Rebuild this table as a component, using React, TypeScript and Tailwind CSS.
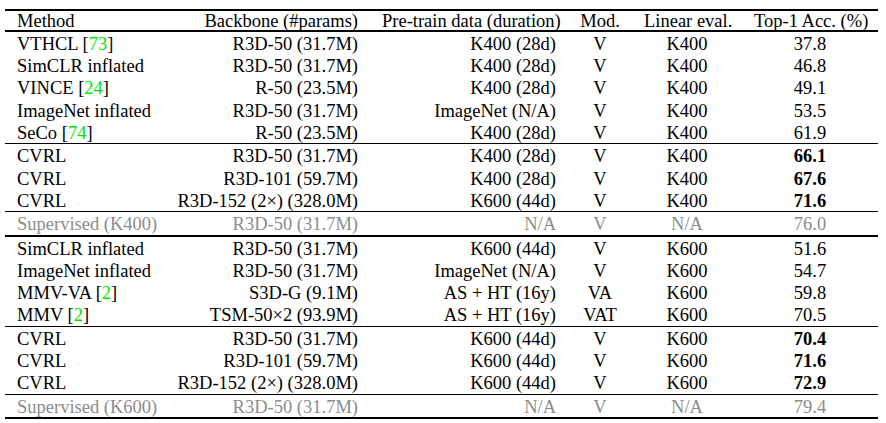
import React from "react";

type Row = {
  m: React.ReactNode;
  b: string;
  p: string;
  mod: string;
  l: string;
  t: string;
  bold?: boolean;
  gray?: boolean;
};

const G = ({ n }: { n: string }) => (
  <>
    [<span className="text-[#00e600]">{n}</span>]
  </>
);

const groups: { rows: Row[]; after: "thin" | "thick" | "bottom" }[] = [
  {
    rows: [
      { m: <>VTHCL <G n="73" /></>, b: "R3D-50 (31.7M)", p: "K400 (28d)", mod: "V", l: "K400", t: "37.8" },
      { m: "SimCLR inflated", b: "R3D-50 (31.7M)", p: "K400 (28d)", mod: "V", l: "K400", t: "46.8" },
      { m: <>VINCE <G n="24" /></>, b: "R-50 (23.5M)", p: "K400 (28d)", mod: "V", l: "K400", t: "49.1" },
      { m: "ImageNet inflated", b: "R3D-50 (31.7M)", p: "ImageNet (N/A)", mod: "V", l: "K400", t: "53.5" },
      { m: <>SeCo <G n="74" /></>, b: "R-50 (23.5M)", p: "K400 (28d)", mod: "V", l: "K400", t: "61.9" },
    ],
    after: "thin",
  },
  {
    rows: [
      { m: "CVRL", b: "R3D-50 (31.7M)", p: "K400 (28d)", mod: "V", l: "K400", t: "66.1", bold: true },
      { m: "CVRL", b: "R3D-101 (59.7M)", p: "K400 (28d)", mod: "V", l: "K400", t: "67.6", bold: true },
      { m: "CVRL", b: "R3D-152 (2×) (328.0M)", p: "K600 (44d)", mod: "V", l: "K400", t: "71.6", bold: true },
    ],
    after: "thin",
  },
  {
    rows: [
      { m: "Supervised (K400)", b: "R3D-50 (31.7M)", p: "N/A", mod: "V", l: "N/A", t: "76.0", gray: true },
    ],
    after: "thick",
  },
  {
    rows: [
      { m: "SimCLR inflated", b: "R3D-50 (31.7M)", p: "K600 (44d)", mod: "V", l: "K600", t: "51.6" },
      { m: "ImageNet inflated", b: "R3D-50 (31.7M)", p: "ImageNet (N/A)", mod: "V", l: "K600", t: "54.7" },
      { m: <>MMV-VA <G n="2" /></>, b: "S3D-G (9.1M)", p: "AS + HT (16y)", mod: "VA", l: "K600", t: "59.8" },
      { m: <>MMV <G n="2" /></>, b: "TSM-50×2 (93.9M)", p: "AS + HT (16y)", mod: "VAT", l: "K600", t: "70.5" },
    ],
    after: "thin",
  },
  {
    rows: [
      { m: "CVRL", b: "R3D-50 (31.7M)", p: "K600 (44d)", mod: "V", l: "K600", t: "70.4", bold: true },
      { m: "CVRL", b: "R3D-101 (59.7M)", p: "K600 (44d)", mod: "V", l: "K600", t: "71.6", bold: true },
      { m: "CVRL", b: "R3D-152 (2×) (328.0M)", p: "K600 (44d)", mod: "V", l: "K600", t: "72.9", bold: true },
    ],
    after: "thin",
  },
  {
    rows: [
      { m: "Supervised (K600)", b: "R3D-50 (31.7M)", p: "N/A", mod: "V", l: "N/A", t: "79.4", gray: true },
    ],
    after: "bottom",
  },
];

const cols = "grid grid-cols-[160px_205px_198px_64px_110px_136px]";

function RowView({ r }: { r: Row }) {
  return (
    <div className={`${cols} h-[22.3px] pt-[2px] items-center leading-none ${r.gray ? "text-[#8c8c8c]" : "text-black"}`}>
      <div className="px-3 text-left whitespace-nowrap">{r.m}</div>
      <div className="px-3 text-right whitespace-nowrap">{r.b}</div>
      <div className="px-3 text-right whitespace-nowrap">{r.p}</div>
      <div className="px-3 text-center whitespace-nowrap">{r.mod}</div>
      <div className="px-3 text-center whitespace-nowrap">{r.l}</div>
      <div className={`px-3 text-center whitespace-nowrap ${r.bold ? "font-bold" : ""}`}>{r.t}</div>
    </div>
  );
}

export default function App() {
  return (
    <div className="w-[886px] h-[423px] bg-white pt-[9px] pl-[5px]" style={{ fontFamily: '"Liberation Serif", "Times New Roman", serif' }}>
      <div className="w-[873px] text-[18.5px] border-t-2 border-black">
        <div className={`${cols} h-[21px] pt-[1px] items-center leading-none border-b-2 border-black`}>
          <div className="px-3 text-left whitespace-nowrap">Method</div>
          <div className="px-3 text-right whitespace-nowrap">Backbone (#params)</div>
          <div className="px-3 text-right whitespace-nowrap">Pre-train data (duration)</div>
          <div className="px-3 text-center whitespace-nowrap">Mod.</div>
          <div className="px-3 text-center whitespace-nowrap">Linear eval.</div>
          <div className="px-3 text-center whitespace-nowrap">Top-1 Acc. (%)</div>
        </div>
        {groups.map((g, i) => (
          <div
            key={i}
            className={
              g.after === "thin"
                ? "border-b border-black"
                : "border-b-2 border-black"
            }
          >
            {g.rows.map((r, j) => (
              <RowView key={j} r={r} />
            ))}
          </div>
        ))}
      </div>
    </div>
  );
}
